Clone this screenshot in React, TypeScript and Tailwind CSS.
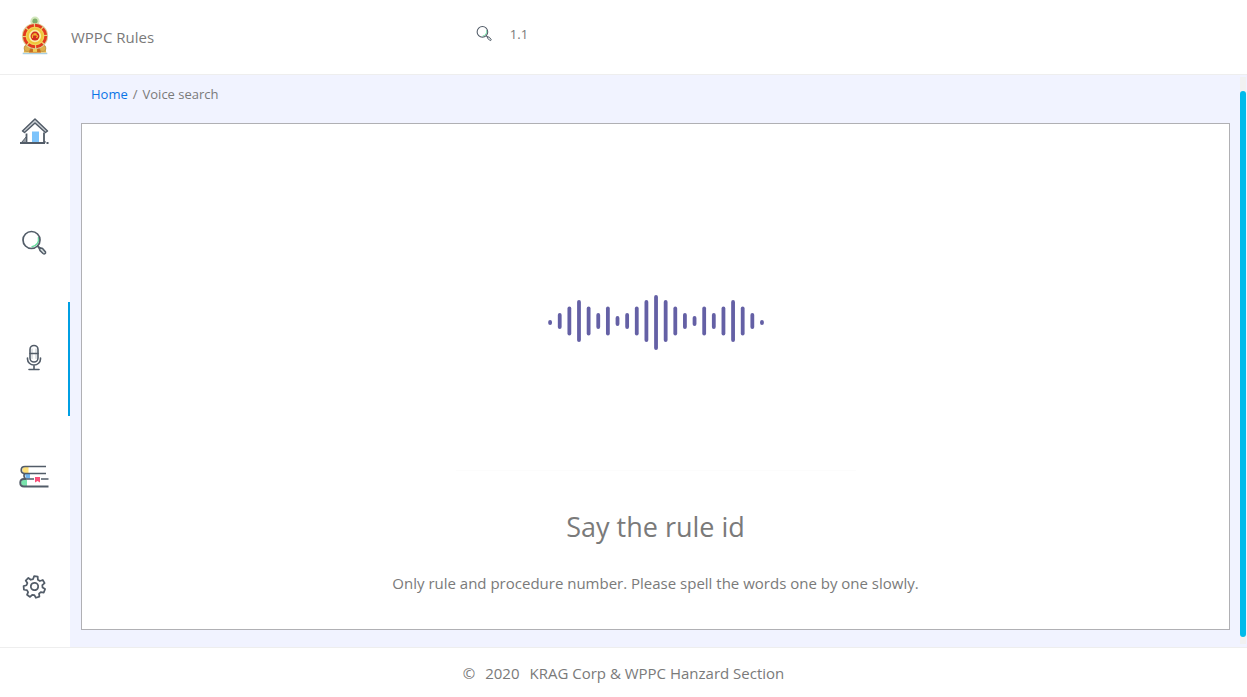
import React from "react";

const SLATE = "#525c68";

function Emblem() {
  return (
    <svg viewBox="1 0 30 39" className="h-10 w-8" aria-hidden="true">
      <path d="M4 37.500h24" stroke="#a9cfe0" strokeWidth="1.500" />
      <circle cx="16" cy="6" r="4.500" fill="#d3e8bd" />
      <circle cx="16" cy="6" r="2.500" fill="#7fae6a" />
      <path d="M7 28h18l2 8.500H5z" fill="#e8b53c" />
      <circle cx="8.500" cy="32.500" r="3" fill="#e0b04a" stroke="#c09a4e" />
      <circle cx="23.500" cy="32.500" r="3" fill="#e0b04a" stroke="#c09a4e" />
      <path d="M12 32h8l2 4.500H10z" fill="#c96c22" />
      <path d="M14 32h4v4h-4z" fill="#f0cf55" />
      <circle cx="16" cy="20.500" r="12.800" fill="#dccf98" />
      <circle cx="16" cy="20.500" r="10.500" fill="#f1d35a" stroke="#e33a1e" strokeWidth="2.800" strokeDasharray="7 1.200" />
      <circle cx="16" cy="20.500" r="7" fill="#fbeea6" stroke="#efc63b" strokeWidth="2" />
      <circle cx="16" cy="20.500" r="4.300" fill="#d12b20" />
      <path d="M13.500 22.500v-3h4l1 1-1 2M14.500 18.500h3" stroke="#f1b72d" strokeWidth="1.200" fill="none" />
    </svg>
  );
}

function HomeIcon() {
  return (
    <svg viewBox="0 0.5 32 32" className="size-8" fill="none" aria-hidden="true">
      <path d="M7 15 17 6l10 9v12H7z" fill="#fff" />
      <path d="M14 16h7v11h-7z" fill="#7cc3fb" />
      <path d="M4.500 15.500 17 3.500l12.500 12-2 1.500L17 7.500 6.500 17z" fill="#cdd1d5" stroke={SLATE} strokeWidth="1.500" strokeLinejoin="round" />
      <path d="M8.500 18v9M26 17v9l1.500 1M2 27.500h25M28.500 27.500h2" stroke={SLATE} strokeWidth="1.800" />
      <path d="m3.500 27 5-6v6z" fill="#9299a1" stroke={SLATE} />
    </svg>
  );
}

function SearchIcon({ className }: { className: string }) {
  return (
    <svg viewBox="0 1 32 32" className={className} fill="none" aria-hidden="true">
      <path d="M20.500 9c.8 5-2 8.800-7 10" stroke="#69dda0" strokeWidth="1.600" />
      <circle cx="13.500" cy="12" r="8.500" stroke={SLATE} strokeWidth="1.700" />
      <path d="m19.500 18 2 2" stroke={SLATE} strokeWidth="1.800" />
      <path d="m21 19.500 3.500 1 3 3.500c.5 1.500-1 2.500-2.500 1.500L22 22.500z" fill="#d8dfdf" stroke={SLATE} strokeWidth="1.500" />
    </svg>
  );
}

function MicIcon() {
  return (
    <svg viewBox="0 0 32 32" className="size-8" fill="none" stroke={SLATE} strokeLinecap="round" aria-hidden="true">
      <rect x="12" y="2.500" width="8" height="16.500" rx="4" strokeWidth="1.600" />
      <path d="M14 6v9.500M18 6v9.500" stroke="#c1c7cd" />
      <path d="M12 10.500h8" strokeWidth="1.600" />
      <path d="M9.500 15v1a6.500 6 0 0 0 13 0v-1M16 22v4M11 26.500h10" strokeWidth="1.600" />
    </svg>
  );
}

function BooksIcon() {
  return (
    <svg viewBox="0 -2 32 32" className="size-8" fill="none" aria-hidden="true">
      <path d="M7 8h3.500v6H7c-3.500 0-3.500-6 0-6z" fill="#ffe178" />
      <path d="M7 15h5v4.500H8z" fill="#6fb4ef" />
      <path d="M6 20.500h3V27H6c-4 0-4-6.500 0-6.500z" fill="#79e3ac" />
      <path d="M28 7.500H7c-5 0-5 7 0 7h21" stroke={SLATE} strokeWidth="1.700" />
      <path d="M6.500 14.500c-1 2-.5 5 1.500 5.500h8M23 20h7.500" stroke={SLATE} strokeWidth="1.700" />
      <path d="M8 20H6c-5 0-5 7.500 0 7.500h24.500" stroke={SLATE} strokeWidth="1.900" />
      <path d="M17 18h5v5.500l-2.500-1.500-2.500 1.500z" fill="#fb4f79" />
    </svg>
  );
}

function GearIcon() {
  return (
    <svg viewBox="-0.5 -3 32 32" className="size-8" fill="none" stroke={SLATE} strokeWidth="1.900" strokeLinejoin="round" aria-hidden="true">
      <g transform="translate(16 13.500) rotate(8) scale(.92)">
        <path d="M-2-11h4l.6 3.200 2.400 1.100 2.900-1.600 2.500 3.200-2.200 2.500.6 2.500 3 1.300-.9 3.900-3.300-.1-1.600 2 .8 3.100-3.600 1.800-2-2.600h-2.400l-2 2.600-3.600-1.800.8-3.100-1.600-2-3.300.1-.9-3.900 3-1.300.6-2.500-2.200-2.500 2.500-3.200 2.900 1.600 2.400-1.100z" />
        <circle r="4" />
      </g>
    </svg>
  );
}

const navItems = [
  { label: "Home", icon: <HomeIcon /> },
  { label: "Search", icon: <SearchIcon className="size-8" /> },
  { label: "Voice search", icon: <MicIcon />, active: true },
  { label: "Library", icon: <BooksIcon /> },
  { label: "Settings", icon: <GearIcon /> },
];

const bars = [5, 16, 29, 42, 29, 16, 29, 10, 16, 29, 42, 55, 42, 29, 16, 10, 29, 16, 29, 42, 29, 16, 5];

function Waveform() {
  return (
    <svg viewBox="0 0 216 56" className="h-14 w-[216px]" role="img" aria-label="Listening">
      {bars.map((height, i) => {
        const center = height === 5 || height === 55 ? 27.5 : 26;
        return (
          <rect key={i} x={0.2 + i * 9.63} y={center - height / 2} width="3.800" height={height} rx="1.900" fill="#6460a5" />
        );
      })}
    </svg>
  );
}

export default function App() {
  return (
    <div className="flex min-h-screen flex-col bg-white font-['Open_Sans','Noto_Sans',sans-serif] text-[#7a7a7a]">
      <header className="grid h-[75px] grid-cols-[38%_1fr] items-center border-b border-[#eee]">
        <a href="#" className="flex items-center gap-5 pl-[19px] text-[15px]">
          <span className="pb-1">
            <Emblem />
          </span>
          <span>WPPC Rules</span>
        </a>
        <form className="flex items-center gap-4 pb-1" onSubmit={(e) => e.preventDefault()}>
          <label htmlFor="rule-search" aria-label="Search rules">
            <SearchIcon className="size-5" />
          </label>
          <input id="rule-search" type="text" defaultValue="1.1" className="w-80 bg-transparent text-[13px] outline-none" />
        </form>
      </header>

      <div className="flex flex-1">
        <nav className="flex w-[70px] shrink-0 flex-col pb-1" aria-label="Main">
          {navItems.map(({ label, icon, active }) => (
            <a
              key={label}
              href="#"
              aria-label={label}
              aria-current={active ? "page" : undefined}
              className={`flex flex-1 items-center justify-center border-r-2 ${active ? "border-[#009fe3]" : "border-transparent"}`}
            >
              {icon}
            </a>
          ))}
        </nav>

        <div className="flex min-w-0 flex-1 bg-[#f1f3ff]">
          <main className="flex min-w-0 flex-1 flex-col pr-[10px] pb-[17px] pl-[11px]">
            <div className="flex h-12 items-center gap-[5px] px-[10px] pb-2 text-[13px]">
              <a href="#" className="text-[#0a74e6]">Home</a>
              <span>/</span>
              <span>Voice search</span>
            </div>
            <section className="flex flex-1 flex-col items-center border border-[#b0b0b4] bg-white px-4 pb-[34px] text-center">
              <div className="mb-9 flex w-full max-w-[400px] flex-1 items-center justify-center border-b border-[#fcfcfc] pt-[52px]">
                <Waveform />
              </div>
              <h1 className="text-[27px] leading-10">Say the rule id</h1>
              <p className="mt-6 text-[15px] leading-6">
                Only rule and procedure number. Please spell the words one by one slowly.
              </p>
            </section>
          </main>
          <div className="mt-[2px] mr-px mb-[3px] flex w-[6px] flex-col bg-[#f1f1f1] pt-[14px] pb-[7px]" aria-hidden="true">
            <div className="flex-1 rounded-full bg-[#00bbea]" />
          </div>
        </div>
      </div>

      <footer className="flex h-[50px] items-center justify-center gap-[10px] border-t border-[#eee] pt-px text-[15px]">
        <span>©</span>
        <span>2020</span>
        <span>KRAG Corp &amp; WPPC Hanzard Section</span>
      </footer>
    </div>
  );
}
